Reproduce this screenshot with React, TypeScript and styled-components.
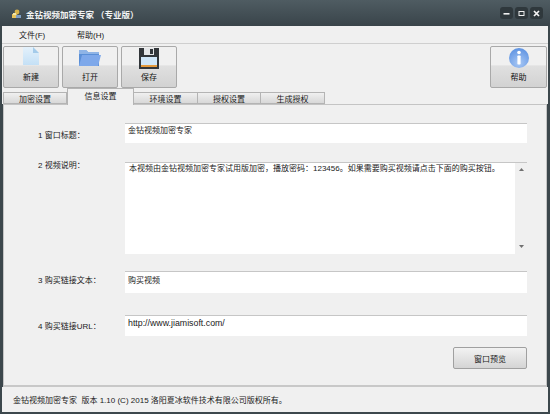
import React from 'react'
import styled, { createGlobalStyle } from 'styled-components'

const GlobalStyle = createGlobalStyle`
  html, body {
    margin: 0;
    padding: 0;
    background: #3c474c;
  }
  body {
    font-family: "Liberation Sans", "Noto Sans CJK SC", sans-serif;
    font-size: 8px;
    color: #1a1a1a;
  }
`

const Window = styled.div`
  width: 550px;
  height: 414px;
  box-sizing: border-box;
  padding: 0 2px 2px 2px;
  display: flex;
  flex-direction: column;
  overflow: hidden;
  background: #3c474c;
`

const TitleBar = styled.div`
  height: 26px;
  flex: none;
  box-sizing: border-box;
  margin: 0 -2px;
  padding: 1px 7px 0 10px;
  display: flex;
  align-items: center;
  background: linear-gradient(#4f5c62, #39444a);
`

const AppTitle = styled.div`
  margin-left: 3px;
  color: #f2f4f4;
  font-size: 8.5px;
  font-weight: bold;
  font-family: "Noto Sans CJK SC", sans-serif;
  white-space: pre;
`

const WinButtons = styled.div`
  margin-left: auto;
  margin-top: -1px;
  display: flex;
  gap: 2px;
`

const WinButton = styled.div`
  width: 13px;
  height: 12px;
  border-radius: 3px;
  background: #2f383c;
  display: flex;
  align-items: center;
  justify-content: center;
`

const MenuBar = styled.div`
  height: 18px;
  flex: none;
  box-sizing: border-box;
  display: flex;
  align-items: center;
  background: #f0f0f0;
  border-bottom: 1px solid #cfcfcf;
`

const MenuItem = styled.div<{ $width: number }>`
  width: ${(p) => p.$width}px;
  padding-left: 17px;
  box-sizing: border-box;
  font-size: 8px;
`

const Toolbar = styled.div`
  height: 44px;
  flex: none;
  padding: 2px 1px 0 1px;
  box-sizing: border-box;
  display: flex;
  gap: 3px;
  background: #f0f0f0;
`

const ToolButton = styled.div<{ $right?: boolean }>`
  width: ${(p) => (p.$right ? 57 : 56)}px;
  height: 42px;
  box-sizing: border-box;
  margin-left: ${(p) => (p.$right ? 'auto' : '0')};
  border: 1px solid #a9a9a9;
  border-radius: 2px;
  display: flex;
  flex-direction: column;
  align-items: center;
  background: linear-gradient(#f0f0f0 0, #f0f0f0 45%, #e0e0e0 47%, #d2d2d2 100%);
`

const ToolIcon = styled.svg`
  display: block;
  width: 22px;
  height: 23px;
  flex: none;
`

const ToolLabel = styled.div`
  font-size: 8px;
  line-height: 10px;
  margin-top: 3px;
  color: #111;
`

const TabStrip = styled.div`
  height: 16px;
  flex: none;
  box-sizing: border-box;
  padding: 0 0 0 1px;
  display: flex;
  align-items: flex-end;
  background: #f0f0f0;
  position: relative;
  z-index: 1;
`

const Tab = styled.div<{ $active?: boolean; $width: number }>`
  width: ${(p) => p.$width}px;
  height: ${(p) => (p.$active ? 17 : 12)}px;
  box-sizing: border-box;
  margin-bottom: ${(p) => (p.$active ? -1 : 0)}px;
  border: 1px solid #b4b4b4;
  border-bottom: ${(p) => (p.$active ? 'none' : '1px solid #b4b4b4')};
  border-left: ${(p) => (p.$active ? '1px solid #b4b4b4' : 'none')};
  display: flex;
  align-items: center;
  justify-content: center;
  font-size: 8px;
  padding-bottom: ${(p) => (p.$active ? 4 : 0)}px;
  background: ${(p) => (p.$active ? '#f0f0f0' : 'linear-gradient(#f0f0f0, #d8d8d8)')};
  &:first-child {
    border-left: 1px solid #b4b4b4;
  }
`

const Panel = styled.div`
  height: 283px;
  flex: none;
  margin: 0 1px;
  box-sizing: border-box;
  border: 1px solid #c4c4c4;
  border-bottom: 2px solid #c8c8c8;
  background: #f0f0f0;
  padding: 18px 19px 0 34px;
  display: flex;
  flex-direction: column;
`

const FormRow = styled.div<{ $top: number }>`
  display: flex;
  margin-top: ${(p) => p.$top}px;
`

const FieldLabel = styled.div<{ $offset: number }>`
  width: 87px;
  flex: none;
  margin-top: ${(p) => p.$offset}px;
  font-size: 8px;
  line-height: 10px;
  white-space: pre;
`

const Field = styled.div<{ $height: number; $pad: number }>`
  flex: 1;
  height: ${(p) => p.$height}px;
  box-sizing: border-box;
  background: #fff;
  border-top: 1px solid #c6c6c6;
  padding: ${(p) => p.$pad}px 0 0 3px;
  font-size: 8px;
  line-height: 10px;
  display: flex;
`

const FieldText = styled.div`
  flex: 1;
  white-space: nowrap;
  overflow: hidden;
`

const UrlText = styled(FieldText)`
  font-size: 8.8px;
`

const MemoText = styled(FieldText)`
  padding-left: 1px;
`

const ScrollBar = styled.div`
  width: 12px;
  flex: none;
  margin-top: -1px;
  background: #f0f0f0;
  display: flex;
  flex-direction: column;
  justify-content: space-between;
  align-items: center;
  padding: 5px 0 6px;
  box-sizing: border-box;
`

const PreviewRow = styled.div`
  display: flex;
  justify-content: flex-end;
  margin-top: 11px;
`

const PreviewButton = styled.div`
  width: 74px;
  height: 22px;
  box-sizing: border-box;
  border: 1px solid #a0a0a0;
  border-radius: 2px;
  background: linear-gradient(#f2f2f2, #d4d4d4);
  display: flex;
  align-items: center;
  justify-content: center;
  font-size: 8px;
`

const StatusBar = styled.div`
  flex: 1;
  display: flex;
  align-items: center;
  padding-left: 11px;
  background: #f0f0f0;
  font-size: 8px;
  white-space: pre;
`

const AppIcon = () => (
  <svg width="13" height="13" viewBox="0 0 13 13">
    <rect x="2" y="7" width="5" height="4" fill="#e8c35a" />
    <rect x="6" y="8" width="5" height="3" fill="#7f9fc4" />
    <circle cx="7" cy="5" r="2.4" fill="#d9b44a" />
    <rect x="3" y="6" width="3" height="2" fill="#f3e6a8" />
  </svg>
)

const NewIcon = () => (
  <ToolIcon viewBox="0 0 22 23">
    <defs>
      <linearGradient id="newDoc" x1="0" y1="0" x2="0" y2="1">
        <stop offset="0" stopColor="#e4f1fb" />
        <stop offset="1" stopColor="#c4e0f6" />
      </linearGradient>
    </defs>
    <path d="M3 0 H13 L19 6 V18 H3 Z" fill="url(#newDoc)" />
    <path d="M13 0 L19 6 H13 Z" fill="#a4cbea" />
  </ToolIcon>
)

const OpenIcon = () => (
  <ToolIcon viewBox="0 0 22 23">
    <path d="M0 3 H7 L9 5 H20 V19 H0 Z" fill="#5b8fd6" />
    <path d="M0 3 H7 L9 5 H20 V7 H0 Z" fill="#8fb4e6" />
    <path d="M3 8 H22 L19 19 H0 Z" fill="#7ea8ea" />
  </ToolIcon>
)

const SaveIcon = () => (
  <ToolIcon viewBox="0 0 22 23">
    <path d="M1 1 H21 V22 H1 Z" fill="#32363a" />
    <rect x="6" y="1" width="10" height="7" fill="#e4e6e8" />
    <rect x="12" y="2" width="3" height="5" fill="#32363a" />
    <rect x="3" y="10" width="16" height="10" fill="#cfe6f8" />
    <rect x="3" y="18" width="16" height="2" fill="#e59a3c" />
  </ToolIcon>
)

const InfoIcon = () => (
  <ToolIcon viewBox="0 0 22 23">
    <defs>
      <radialGradient id="infoBall" cx="0.5" cy="0.75" r="0.75">
        <stop offset="0" stopColor="#a9c8f4" />
        <stop offset="1" stopColor="#5e93e2" />
      </radialGradient>
    </defs>
    <circle cx="11" cy="11" r="10" fill="url(#infoBall)" />
    <circle cx="11" cy="5.5" r="1.8" fill="#fff" />
    <rect x="9.4" y="8.5" width="3.2" height="9" rx="0.8" fill="#fff" />
  </ToolIcon>
)

const MinGlyph = () => (
  <svg width="7" height="7" viewBox="0 0 7 7"><rect x="0.5" y="3" width="6" height="1.6" fill="#f0f0f0" /></svg>
)
const MaxGlyph = () => (
  <svg width="7" height="7" viewBox="0 0 7 7"><rect x="1" y="1.5" width="5" height="4" fill="none" stroke="#f0f0f0" strokeWidth="1" /></svg>
)
const CloseGlyph = () => (
  <svg width="7" height="7" viewBox="0 0 7 7"><path d="M1 1 L6 6 M6 1 L1 6" stroke="#f4f4f4" strokeWidth="1.7" /></svg>
)
const ArrowUp = () => (
  <svg width="5" height="3" viewBox="0 0 5 3"><path d="M2.5 0 L5 3 H0 Z" fill="#707070" /></svg>
)
const ArrowDown = () => (
  <svg width="5" height="3" viewBox="0 0 5 3"><path d="M0 0 H5 L2.5 3 Z" fill="#707070" /></svg>
)

const tabs = [
  { label: '加密设置', width: 64 },
  { label: '信息设置', width: 67, active: true },
  { label: '环境设置', width: 64 },
  { label: '授权设置', width: 63 },
  { label: '生成授权', width: 64 },
]

const App = () => {
  return (
    <Window>
      <GlobalStyle />
      <TitleBar>
        <AppIcon />
        <AppTitle>金钻视频加密专家 （专业版）</AppTitle>
        <WinButtons>
          <WinButton><MinGlyph /></WinButton>
          <WinButton><MaxGlyph /></WinButton>
          <WinButton><CloseGlyph /></WinButton>
        </WinButtons>
      </TitleBar>
      <MenuBar>
        <MenuItem $width={58}>文件(F)</MenuItem>
        <MenuItem $width={70}>帮助(H)</MenuItem>
      </MenuBar>
      <Toolbar>
        <ToolButton><NewIcon /><ToolLabel>新建</ToolLabel></ToolButton>
        <ToolButton><OpenIcon /><ToolLabel>打开</ToolLabel></ToolButton>
        <ToolButton><SaveIcon /><ToolLabel>保存</ToolLabel></ToolButton>
        <ToolButton $right><InfoIcon /><ToolLabel>帮助</ToolLabel></ToolButton>
      </Toolbar>
      <TabStrip>
        {tabs.map((t) => (
          <Tab key={t.label} $active={t.active} $width={t.width}>{t.label}</Tab>
        ))}
      </TabStrip>
      <Panel>
        <FormRow $top={0}>
          <FieldLabel $offset={8}>1 窗口标题：</FieldLabel>
          <Field $height={20} $pad={2}><FieldText>金钻视频加密专家</FieldText></Field>
        </FormRow>
        <FormRow $top={19}>
          <FieldLabel $offset={-1}>2 视频说明：</FieldLabel>
          <Field $height={92} $pad={1}>
            <MemoText>本视频由金钻视频加密专家试用版加密，播放密码：123456。如果需要购买视频请点击下面的购买按钮。</MemoText>
            <ScrollBar><ArrowUp /><ArrowDown /></ScrollBar>
          </Field>
        </FormRow>
        <FormRow $top={17}>
          <FieldLabel $offset={5}>3 购买链接文本：</FieldLabel>
          <Field $height={22} $pad={4}><FieldText>购买视频</FieldText></Field>
        </FormRow>
        <FormRow $top={22}>
          <FieldLabel $offset={7}>4 购买链接URL：</FieldLabel>
          <Field $height={21} $pad={2}><UrlText>http://www.jiamisoft.com/</UrlText></Field>
        </FormRow>
        <PreviewRow>
          <PreviewButton>窗口预览</PreviewButton>
        </PreviewRow>
      </Panel>
      <StatusBar>金钻视频加密专家  版本 1.10 (C) 2015 洛阳夏冰软件技术有限公司版权所有。</StatusBar>
    </Window>
  )
}

export default App
